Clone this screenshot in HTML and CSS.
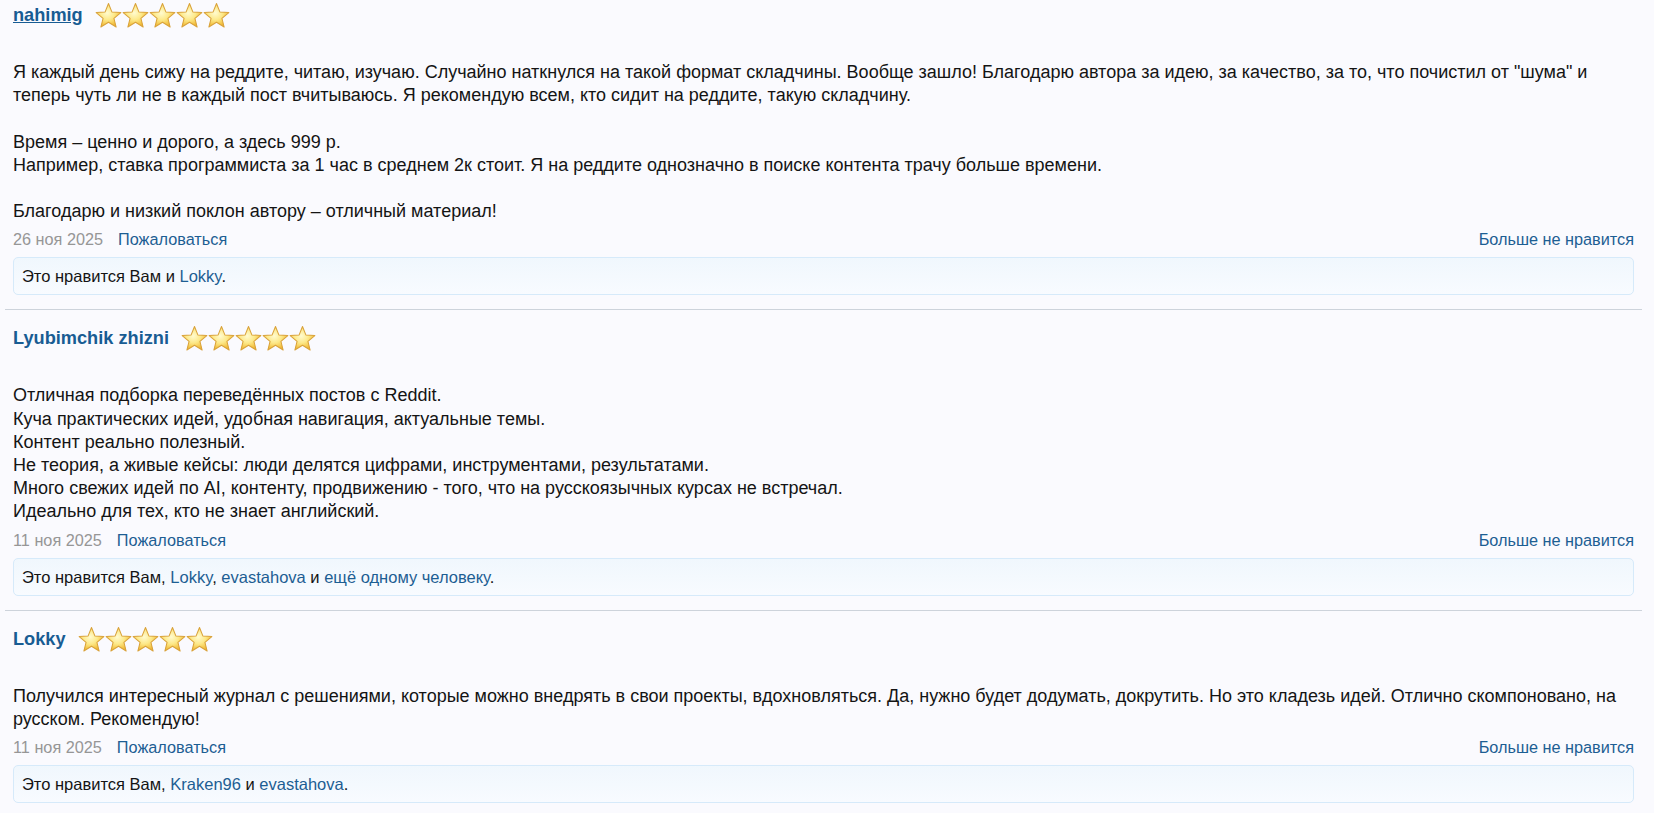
FILE: index.html
```html
<!DOCTYPE html>
<html lang="ru">
<head>
<meta charset="utf-8">
<title>Отзывы</title>
<link rel="stylesheet" href="styles.css">
</head>
<body>
<svg class="defs" width="0" height="0" aria-hidden="true">
  <defs>
    <radialGradient id="starFill" cx="0.45" cy="0.4" r="0.65">
      <stop offset="0" stop-color="#fffbd0"/>
      <stop offset="0.45" stop-color="#fde98a"/>
      <stop offset="0.8" stop-color="#f4c445"/>
      <stop offset="1" stop-color="#e7a72a"/>
    </radialGradient>
    <symbol id="star" viewBox="0 0 26 26">
      <path d="M13 1.5 L16.23 9.55 L24.89 10.14 L18.23 15.7 L20.35 24.11 L13 19.5 L5.65 24.11 L7.77 15.7 L1.11 10.14 L9.77 9.55 Z" fill="url(#starFill)" stroke="#d9a23a" stroke-width="1" stroke-linejoin="round"/>
    </symbol>
  </defs>
</svg>

<ol class="comments">
  <li class="comment">
    <div class="head">
      <a class="name hover" href="#">nahimig</a>
      <span class="stars">
        <svg class="star"><use href="#star"/></svg><svg class="star"><use href="#star"/></svg><svg class="star"><use href="#star"/></svg><svg class="star"><use href="#star"/></svg><svg class="star"><use href="#star"/></svg>
      </span>
    </div>
    <div class="text">Я каждый день сижу на реддите, читаю, изучаю. Случайно наткнулся на такой формат складчины. Вообще зашло! Благодарю автора за идею, за качество, за то, что почистил от "шума" и теперь чуть ли не в каждый пост вчитываюсь. Я рекомендую всем, кто сидит на реддите, такую складчину.<br><br>Время – ценно и дорого, а здесь 999 р.<br>Например, ставка программиста за 1 час в среднем 2к стоит. Я на реддите однозначно в поиске контента трачу больше времени.<br><br>Благодарю и низкий поклон автору – отличный материал!</div>
    <div class="meta">
      <span class="meta-left"><span class="date">26 ноя 2025</span><a class="link" href="#">Пожаловаться</a></span>
      <a class="link" href="#">Больше не нравится</a>
    </div>
    <div class="likes">Это нравится Вам и <a class="link" href="#">Lokky</a>.</div>
  </li>

  <li class="comment">
    <div class="head">
      <a class="name" href="#">Lyubimchik zhizni</a>
      <span class="stars">
        <svg class="star"><use href="#star"/></svg><svg class="star"><use href="#star"/></svg><svg class="star"><use href="#star"/></svg><svg class="star"><use href="#star"/></svg><svg class="star"><use href="#star"/></svg>
      </span>
    </div>
    <div class="text">Отличная подборка переведённых постов с Reddit.<br>Куча практических идей, удобная навигация, актуальные темы.<br>Контент реально полезный.<br>Не теория, а живые кейсы: люди делятся цифрами, инструментами, результатами.<br>Много свежих идей по AI, контенту, продвижению - того, что на русскоязычных курсах не встречал.<br>Идеально для тех, кто не знает английский.</div>
    <div class="meta">
      <span class="meta-left"><span class="date">11 ноя 2025</span><a class="link" href="#">Пожаловаться</a></span>
      <a class="link" href="#">Больше не нравится</a>
    </div>
    <div class="likes">Это нравится Вам, <a class="link" href="#">Lokky</a>, <a class="link" href="#">evastahova</a> и <a class="link" href="#">ещё одному человеку</a>.</div>
  </li>

  <li class="comment">
    <div class="head">
      <a class="name" href="#">Lokky</a>
      <span class="stars">
        <svg class="star"><use href="#star"/></svg><svg class="star"><use href="#star"/></svg><svg class="star"><use href="#star"/></svg><svg class="star"><use href="#star"/></svg><svg class="star"><use href="#star"/></svg>
      </span>
    </div>
    <div class="text">Получился интересный журнал с решениями, которые можно внедрять в свои проекты, вдохновляться. Да, нужно будет додумать, докрутить. Но это кладезь идей. Отлично скомпоновано, на русском. Рекомендую!</div>
    <div class="meta">
      <span class="meta-left"><span class="date">11 ноя 2025</span><a class="link" href="#">Пожаловаться</a></span>
      <a class="link" href="#">Больше не нравится</a>
    </div>
    <div class="likes">Это нравится Вам, <a class="link" href="#">Kraken96</a> и <a class="link" href="#">evastahova</a>.</div>
  </li>
</ol>
</body>
</html>
```

FILE: styles.css
```css
html, body {
  margin: 0;
  padding: 0;
  background: #fafafe;
}

body {
  font-family: "Liberation Sans", Arial, sans-serif;
  color: #141414;
  font-size: 16px;
  overflow: hidden;
}

.defs {
  position: absolute;
  width: 0;
  height: 0;
}

.comments {
  list-style: none;
  margin: -13px 12px 0 5px;
  padding: 0;
}

.comment {
  padding: 15px 8px 14px 8px;
}

.comment + .comment {
  border-top: 1px solid #cdd3db;
}

.head {
  display: flex;
  align-items: center;
  height: 27px;
  margin-bottom: 32px;
}

.name {
  font-weight: bold;
  font-size: 18.2px;
  color: #185c93;
  text-decoration: none;
}

.name.hover {
  text-decoration: underline;
}

.stars {
  display: flex;
  margin-left: 12px;
}

.star {
  width: 27px;
  height: 27px;
  display: block;
}

.text {
  font-size: 18px;
  line-height: 23.2px;
}

.meta {
  display: flex;
  justify-content: space-between;
  margin-top: 6px;
  line-height: 20px;
  font-size: 16.25px;
}

.meta-left {
  display: flex;
  gap: 15px;
}

.date {
  color: #969696;
}

.link {
  color: #1d5e93;
  text-decoration: none;
}

.likes {
  margin-top: 8px;
  padding: 7px 8px;
  line-height: 22px;
  font-size: 16.5px;
  border: 1px solid #d6eafa;
  border-radius: 5px;
  background: linear-gradient(to bottom, #f0f7fd, #f8fbff);
}
```
